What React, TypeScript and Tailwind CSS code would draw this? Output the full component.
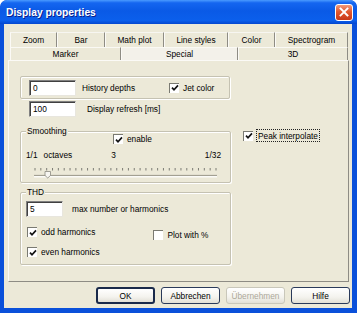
import React from "react";

function Check({ checked }: { checked: boolean }) {
  return (
    <span className="w-[10px] h-[10px] shrink-0 bg-white border-t border-l border-[#7a7a72] border-r-[#e6e4dc] border-b-[#e6e4dc] flex items-center justify-center">
      {checked && (
        <svg width="8" height="8" viewBox="0 0 8 8">
          <path d="M1 3.6 L3 5.8 L7 1.4" stroke="#141414" strokeWidth="1.7" fill="none" />
        </svg>
      )}
    </span>
  );
}

function TextBox({ value, w }: { value: string; w: string }) {
  return (
    <div
      className={`${w} h-[16px] shrink-0 bg-white border border-t-[#808080] border-l-[#808080] border-r-[#e8e6de] border-b-[#e8e6de] shadow-[inset_1px_1px_0_#404040] flex items-center pl-[3px]`}
    >
      {value}
    </div>
  );
}

function Group({ title, className, children }: { title?: string; className: string; children?: React.ReactNode }) {
  return (
    <div
      className={`relative border border-[#c5c2b2] rounded-[2px] shadow-[inset_1px_1px_0_#fff,1px_1px_0_#fff] ${className}`}
    >
      {title && (
        <span className="absolute left-[5px] top-[-6px] bg-[#ECE9D8] px-[1px] leading-[10px]">{title}</span>
      )}
      {children}
    </div>
  );
}

function Btn({ label, def, disabled }: { label: string; def?: boolean; disabled?: boolean }) {
  return (
    <div
      className={`w-[59px] h-[17px] rounded-[3px] flex items-center justify-center bg-[linear-gradient(to_bottom,#ffffff,#f4f3ee_60%,#e2e0d6)] ${
        disabled
          ? "border border-[#c9c7ba] text-[#aca899]"
          : def
          ? "border-2 border-[#1a2a4a] text-black"
          : "border border-[#2a3a5a] text-black"
      }`}
    >
      {label}
    </div>
  );
}

function Slider() {
  const ticks = Array.from({ length: 32 }, (_, i) => 14 + (i * 181) / 31);
  return (
    <svg width="211" height="13" viewBox="0 0 211 13" className="block">
      {ticks.map((x, i) => (
        <line key={i} x1={x} x2={x} y1="2" y2="4.5" stroke="#6f6f6a" strokeWidth="0.9" />
      ))}
      <rect x="13" y="9" width="183" height="1" fill="#9d9a8c" />
      <rect x="13" y="10" width="183" height="1.5" fill="#fbfbf8" />
      <rect x="13" y="8.5" width="183" height="0.6" fill="#d8d5c8" />
      <path d="M24 5.5 H29.5 V9.5 L26.75 12 L24 9.5 Z" fill="#f7f6f1" stroke="#8b8a80" strokeWidth="0.8" />
    </svg>
  );
}

export default function App() {
  const row1 = [
    { l: "Zoom", w: "w-[47px]" },
    { l: "Bar", w: "w-[48px]" },
    { l: "Math plot", w: "w-[59px]" },
    { l: "Line styles", w: "w-[64px]" },
    { l: "Color", w: "w-[47px]" },
    { l: "Spectrogram", w: "w-[73px]" },
  ];
  const row2 = [
    { l: "Marker", w: "w-[111px]", sel: false },
    { l: "Special", w: "w-[117px]", sel: true },
    { l: "3D", w: "w-[110px]", sel: false },
  ];
  return (
    <div className="w-[357px] h-[313px] bg-[#0A50DA] rounded-t-[7px] flex flex-col overflow-hidden font-['Liberation_Sans',Arial,sans-serif] text-[8.3px] leading-[10px] text-black">
      {/* Title bar */}
      <div className="h-[24px] shrink-0 flex items-center justify-between pl-[6px] pr-[4px] rounded-t-[7px] bg-[linear-gradient(to_bottom,#4a9bff_0%,#1566f0_12%,#0a5ae6_45%,#0b5fec_85%,#0447cf_100%)]">
        <span className="text-white font-bold text-[10.3px] leading-[12px] mt-[1px] [text-shadow:1px_1px_0_#0a1d8a]">
          Display properties
        </span>
        <div className="w-[18px] h-[17px] rounded-[3px] border border-white bg-[linear-gradient(to_bottom,#f09a7c,#e2582f_45%,#c8391a)] flex items-center justify-center">
          <svg width="10" height="10" viewBox="0 0 10 10">
            <path d="M1.5 1.5 L8.5 8.5 M8.5 1.5 L1.5 8.5" stroke="#fff" strokeWidth="1.9" strokeLinecap="square" />
          </svg>
        </div>
      </div>

      {/* Client area */}
      <div className="flex-1 ml-[4px] mr-[5px] mb-[5px] bg-[#ECE9D8] flex flex-col">
        {/* Tabs */}
        <div className="mt-[8px] ml-[6px] mr-[4px] flex flex-col">
          <div className="flex h-[15px]">
            {row1.map((t) => (
              <div
                key={t.l}
                className={`${t.w} h-full flex items-center justify-center border-l border-l-[#fbfaf6] border-r border-r-[#8e8c84] border-t border-t-[#f7f6f1]`}
              >
                {t.l}
              </div>
            ))}
          </div>
          <div className="flex h-[13px]">
            {row2.map((t) => (
              <div
                key={t.l}
                className={`${t.w} h-full flex items-center justify-center border-t border-t-[#faf9f4] border-l border-l-[#fbfaf6] border-r border-r-[#8e8c84] ${
                  t.sel ? "bg-[#F3F1EA]" : ""
                }`}
              >
                {t.l}
              </div>
            ))}
          </div>
        </div>

        {/* Panel */}
        <div className="ml-[4px] mr-[3px] h-[222px] border border-t-[#fbfaf6] border-l-[#fbfaf6] border-r-[#8e8c84] border-b-[#8e8c84] flex pl-[11px] pt-[15px]">
          <div className="w-[211px] flex flex-col">
            <Group className="h-[23px] w-[210px] flex items-center pl-[8px]">
              <TextBox value="0" w="w-[47px]" />
              <span className="ml-[6px]">History depths</span>
              <span className="ml-[34px] flex items-center">
                <Check checked />
                <span className="ml-[4px]">Jet color</span>
              </span>
            </Group>
            <div className="mt-[2px] ml-[9px] flex items-center">
              <TextBox value="100" w="w-[47px]" />
              <span className="ml-[11px]">Display refresh [ms]</span>
            </div>

            <Group title="Smoothing" className="mt-[14px] h-[52px] flex flex-col">
              <div className="mt-[2px] ml-[92px] flex items-center">
                <Check checked />
                <span className="ml-[4px]">enable</span>
              </div>
              <div className="mt-[6px] flex items-center">
                <span className="ml-[5px]">1/1</span>
                <span className="ml-[6px]">octaves</span>
                <span className="ml-[39px]">3</span>
                <span className="ml-auto mr-[9px]">1/32</span>
              </div>
              <div className="mt-[6px]">
                <Slider />
              </div>
            </Group>

            <Group title="THD" className="mt-[9px] h-[73px] flex flex-col">
              <div className="mt-[8px] ml-[5px] flex items-center">
                <TextBox value="5" w="w-[37px]" />
                <span className="ml-[9px]">max number or harmonics</span>
              </div>
              <div className="mt-[10px] ml-[6px] flex items-start">
                <span className="flex items-center">
                  <Check checked />
                  <span className="ml-[4px]">odd harmonics</span>
                </span>
                <span className="ml-[58px] mt-[3px] flex items-center">
                  <Check checked={false} />
                  <span className="ml-[4px]">Plot with %</span>
                </span>
              </div>
              <div className="mt-[7px] ml-[6px] flex items-center">
                <Check checked />
                <span className="ml-[4px]">even harmonics</span>
              </div>
            </Group>
          </div>

          <div className="ml-[12px] mt-[53px] flex items-start">
            <span className="flex items-center h-[13px]">
              <Check checked />
              <span className="ml-[3px] border border-dotted border-[#222] px-[1px] h-[13px] flex items-center">
                Peak interpolate
              </span>
            </span>
          </div>
        </div>

        {/* Buttons */}
        <div className="mt-[5px] flex justify-end gap-[6px] pr-[2px]">
          <Btn label="OK" def />
          <Btn label="Abbrechen" />
          <Btn label="Übernehmen" disabled />
          <Btn label="Hilfe" />
        </div>
      </div>
    </div>
  );
}
